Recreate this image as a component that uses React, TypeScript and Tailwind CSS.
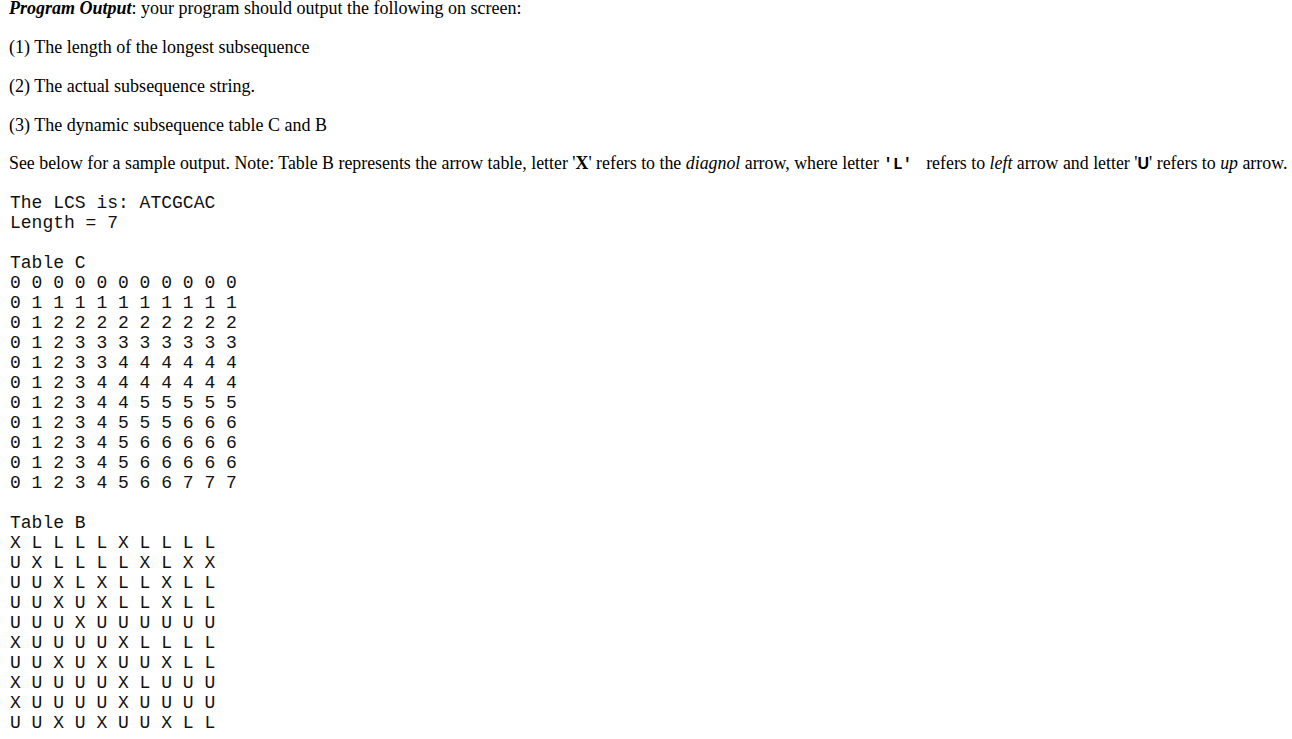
import React from "react";

const serif = { fontFamily: '"Liberation Serif", "Times New Roman", serif' };

const tableC = [
  "0 0 0 0 0 0 0 0 0 0 0",
  "0 1 1 1 1 1 1 1 1 1 1",
  "0 1 2 2 2 2 2 2 2 2 2",
  "0 1 2 3 3 3 3 3 3 3 3",
  "0 1 2 3 3 4 4 4 4 4 4",
  "0 1 2 3 4 4 4 4 4 4 4",
  "0 1 2 3 4 4 5 5 5 5 5",
  "0 1 2 3 4 5 5 5 6 6 6",
  "0 1 2 3 4 5 6 6 6 6 6",
  "0 1 2 3 4 5 6 6 6 6 6",
  "0 1 2 3 4 5 6 6 7 7 7",
];

const tableB = [
  "X L L L L X L L L L",
  "U X L L L L X L X X",
  "U U X L X L L X L L",
  "U U X U X L L X L L",
  "U U U X U U U U U U",
  "X U U U U X L L L L",
  "U U X U X U U X L L",
  "X U U U U X L U U U",
  "X U U U U X U U U U",
  "U U X U X U U X L L",
];

export default function App() {
  const lines = [
    "The LCS is: ATCGCAC",
    "Length = 7",
    "",
    "Table C",
    ...tableC,
    "",
    "Table B",
    ...tableB,
  ];
  return (
    <div className="min-h-[739px] bg-white pl-[9px] text-black">
      <div className="text-[18px] leading-[16px]" style={serif}>
        <p className="mb-[23px]">
          <b>
            <i>Program Output</i>
          </b>
          : your program should output the following on screen:
        </p>
        <p className="mb-[23px]">(1) The length of the longest subsequence</p>
        <p className="mb-[23px]">(2) The actual subsequence string.</p>
        <p className="mb-[23px]">(3) The dynamic subsequence table C and B</p>
        <p className="-mt-px whitespace-nowrap text-[17.85px]">
          See below for a sample output. Note: Table B represents the arrow table, letter '<b>X</b>' refers to the{" "}
          <i>diagnol</i> arrow, where letter{" "}
          <b className="font-['Liberation_Mono',monospace] text-[16px]">'L'&nbsp;</b> refers to <i>left</i> arrow and
          letter '<b className="font-['Liberation_Sans',Arial,sans-serif] text-[16px]">U</b>' refers to <i>up</i> arrow.
        </p>
      </div>
      <pre className="mt-[20px] pl-[1px] font-['Liberation_Mono',monospace] text-[18px] leading-[20px] text-[#111]">
        {lines.join("\n")}
      </pre>
    </div>
  );
}
